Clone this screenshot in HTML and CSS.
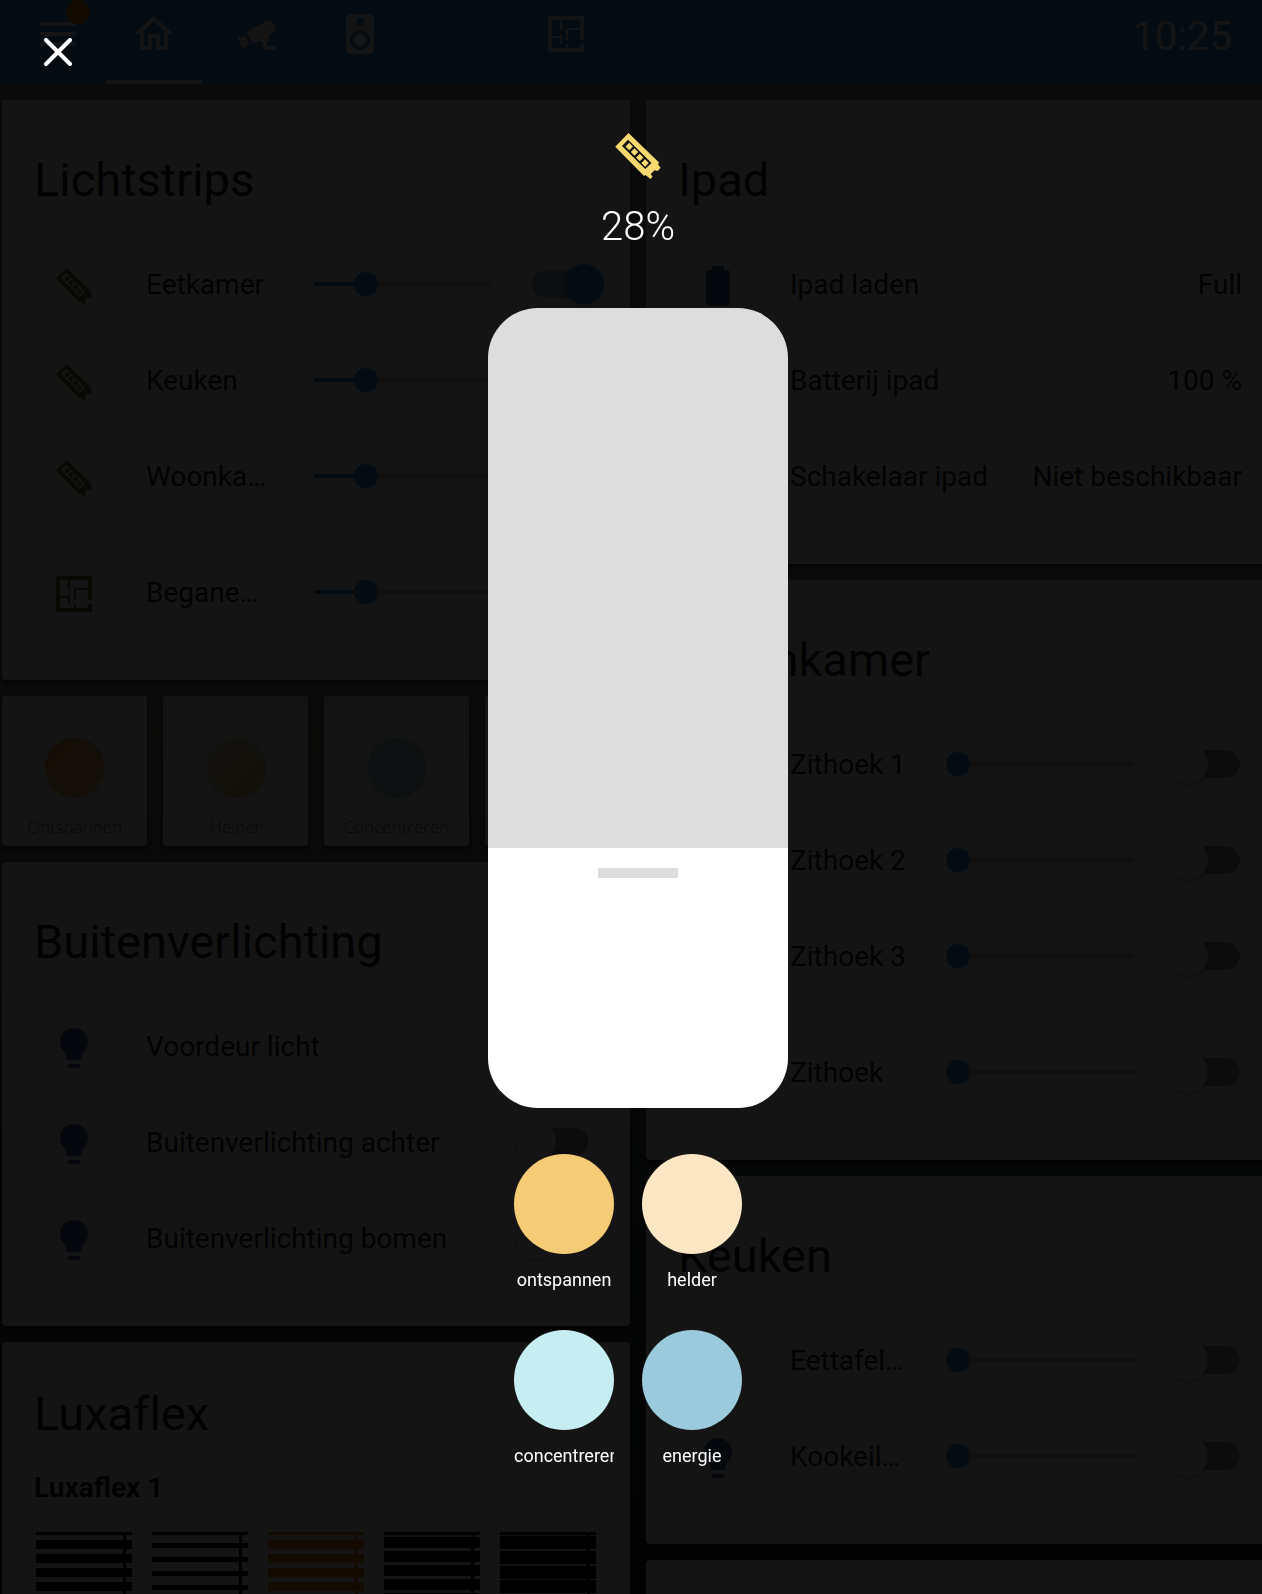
FILE: index.html
```html
<!DOCTYPE html>
<html lang="nl">
<head>
<meta charset="utf-8">
<meta name="viewport" content="width=device-width, initial-scale=1">
<title>Home</title>
<link rel="stylesheet" href="styles.css">
</head>
<body>
<svg class="sprite" aria-hidden="true">
  <symbol id="led" viewBox="0 0 24 24"><path fill-rule="evenodd" d="M8.2 2.8L2.9 8.3L14.4 20L15 19.6L17 21.2L17.8 20.3L17.1 19.2L18.6 17.7L19.9 18L21 16.7L20 15.3L20.4 14.6ZM8 5.5L17.4 14.8L14.9 17.2L5.6 8ZM8.5 6.7L10 8.2L8.5 9.7L7 8.2ZM10.6 8.9L12.1 10.4L10.6 11.9L9.1 10.4ZM12.7 11.1L14.2 12.6L12.7 14.1L11.2 12.6ZM14.8 13.3L16.3 14.8L14.8 16.3L13.3 14.8Z"/></symbol>
  <symbol id="plan" viewBox="0 0 24 24"><path d="M10,5V10H9V5H5V13H9V12H10V17H9V14H5V19H12V17H13V19H19V17H21V21H3V3H21V15H19V10H13V15H12V9H19V5H10Z"/></symbol>
  <symbol id="bulb" viewBox="0 0 24 24"><path d="M12,2A7,7 0 0,0 5,9C5,11.38 6.19,13.47 8,14.74V17A1,1 0 0,0 9,18H15A1,1 0 0,0 16,17V14.74C17.81,13.47 19,11.38 19,9A7,7 0 0,0 12,2M9,21A1,1 0 0,0 10,22H14A1,1 0 0,0 15,21V20H9V21Z"/></symbol>
  <symbol id="battery" viewBox="0 0 24 24"><path d="M16.67,4H15V2H9V4H7.33A1.33,1.33 0 0,0 6,5.33V20.67C6,21.4 6.6,22 7.33,22H16.67A1.33,1.33 0 0,0 18,20.67V5.33C18,4.6 17.4,4 16.67,4Z"/></symbol>
</svg>

<div class="app">
  <header class="bar">
    <button class="menu" aria-label="Menu">
      <svg class="icon" viewBox="0 0 24 24"><path d="M3,6H21V8H3V6M3,11H21V13H3V11M3,16H21V18H3V16Z"/></svg>
      <span class="dot"></span>
    </button>
    <nav class="tabs">
      <a class="tab active" href="#home" aria-label="Home"><svg class="icon" viewBox="0 0 24 24"><path d="M12 5.69L17 10.19V18H15V12H9V18H7V10.19L12 5.69M12 3L2 12H5V20H11V14H13V20H19V12H22L12 3Z"/></svg></a>
      <a class="tab" href="#cameras" aria-label="Camera's"><svg class="icon" viewBox="0 0 24 24"><path d="M18.15,4.94C17.77,4.91 17.37,5 17,5.2L8.35,10.2C7.39,10.76 7.07,12 7.62,12.94L9.12,15.53C9.67,16.5 10.89,16.82 11.85,16.27L13.65,15.23C13.92,15.69 14.32,16.06 14.81,16.27V18.04C14.81,19.13 15.7,20 16.81,20H22V18.04H16.81V16.27C17.72,15.87 18.31,14.97 18.31,14C18.31,13.54 18.19,13.11 17.97,12.73L20.5,11.27C21.47,10.71 21.8,9.5 21.24,8.53L19.74,5.94C19.4,5.34 18.79,5 18.15,4.94M6.22,13.17L2,13.87L2.75,15.17L4.75,18.63L5.5,19.93L8.22,16.63L6.22,13.17Z"/></svg></a>
      <a class="tab" href="#audio" aria-label="Audio"><svg class="icon" viewBox="0 0 24 24"><path d="M12,12A3,3 0 0,0 9,15A3,3 0 0,0 12,18A3,3 0 0,0 15,15A3,3 0 0,0 12,12M12,20A5,5 0 0,1 7,15A5,5 0 0,1 12,10A5,5 0 0,1 17,15A5,5 0 0,1 12,20M12,4A2,2 0 0,1 14,6A2,2 0 0,1 12,8C10.89,8 10,7.1 10,6C10,4.89 10.89,4 12,4M17,2H7C5.89,2 5,2.89 5,4V20A2,2 0 0,0 7,22H17A2,2 0 0,0 19,20V4C19,2.89 18.1,2 17,2Z"/></svg></a>
      <span class="tab"></span>
      <a class="tab" href="#plattegrond" aria-label="Plattegrond"><svg class="icon"><use href="#plan"/></svg></a>
    </nav>
    <time class="clock">10:25</time>
  </header>

  <main class="columns">
    <div class="column">
      <section class="card">
        <h2 class="title">Lichtstrips</h2>
        <div class="rows">
          <div class="row"><svg class="icon lit"><use href="#led"/></svg><span class="name" id="n1">Eetkamer</span><input class="slider on" type="range" max="255" value="75" aria-labelledby="n1"><input class="toggle" type="checkbox" checked aria-labelledby="n1"></div>
          <div class="row"><svg class="icon lit"><use href="#led"/></svg><span class="name" id="n2">Keuken</span><input class="slider on" type="range" max="255" value="75" aria-labelledby="n2"><input class="toggle" type="checkbox" checked aria-labelledby="n2"></div>
          <div class="row"><svg class="icon lit"><use href="#led"/></svg><span class="name" id="n3">Woonka…</span><input class="slider on" type="range" max="255" value="75" aria-labelledby="n3"><input class="toggle" type="checkbox" checked aria-labelledby="n3"></div>
          <div class="row group"><svg class="icon lit"><use href="#plan"/></svg><span class="name" id="n4">Begane…</span><input class="slider on" type="range" max="255" value="75" aria-labelledby="n4"><input class="toggle" type="checkbox" checked aria-labelledby="n4"></div>
        </div>
      </section>

      <div class="scenes">
        <button class="scene"><span class="ball relax"></span>Ontspannen</button>
        <button class="scene"><span class="ball bright"></span>Helder</button>
        <button class="scene"><span class="ball focus"></span>Concentreren</button>
        <button class="scene"><span class="ball energy"></span>Energie</button>
      </div>

      <section class="card">
        <h2 class="title">Buitenverlichting</h2>
        <div class="rows">
          <div class="row"><svg class="icon"><use href="#bulb"/></svg><label class="name wide" for="b1">Voordeur licht</label><input class="toggle" id="b1" type="checkbox"></div>
          <div class="row"><svg class="icon"><use href="#bulb"/></svg><label class="name wide" for="b2">Buitenverlichting achter</label><input class="toggle" id="b2" type="checkbox"></div>
          <div class="row"><svg class="icon"><use href="#bulb"/></svg><label class="name wide" for="b3">Buitenverlichting bomen</label><input class="toggle" id="b3" type="checkbox"></div>
        </div>
      </section>

      <section class="card blinds-card">
        <h2 class="title">Luxaflex</h2>
        <h3 class="subtitle">Luxaflex 1</h3>
        <div class="blinds">
          <svg class="blind" viewBox="0 0 96 96"><path d="M0 0h96v3H0zM87 3h3v93h-3zM0 8h96v9H0zM0 22h96v9H0zM0 36h96v9H0zM0 50h96v9H0zM0 64h96v9H0zM0 78h96v9H0z"/></svg>
          <svg class="blind" viewBox="0 0 96 96"><path d="M0 0h96v3H0zM87 3h3v93h-3zM0 11h96v5H0zM0 25h96v5H0zM0 39h96v5H0zM0 53h96v5H0zM0 67h96v5H0zM0 81h96v5H0z"/></svg>
          <svg class="blind current" viewBox="0 0 96 96"><path d="M0 0h96v3H0zM87 3h3v93h-3zM0 8h96v9H0zM0 22h96v9H0zM0 36h96v9H0zM0 50h96v9H0zM0 64h96v9H0zM0 78h96v9H0z"/></svg>
          <svg class="blind" viewBox="0 0 96 96"><path d="M0 0h96v3H0zM87 3h3v93h-3zM0 5h96v11H0zM0 19h96v11H0zM0 33h96v11H0zM0 47h96v11H0zM0 61h96v11H0zM0 75h96v11H0z"/></svg>
          <svg class="blind" viewBox="0 0 96 96"><path d="M0 0h96v3H0zM87 3h3v93h-3zM0 4h96v13H0zM0 19h96v13H0zM0 34h96v13H0zM0 48h96v13H0zM0 63h96v13H0zM0 78h96v13H0z"/></svg>
        </div>
      </section>
    </div>

    <div class="column right">
      <section class="card">
        <h2 class="title">Ipad</h2>
        <div class="rows">
          <div class="row"><svg class="icon"><use href="#battery"/></svg><span class="name wide">Ipad laden</span><span class="value">Full</span></div>
          <div class="row"><svg class="icon"><use href="#battery"/></svg><span class="name wide">Batterij ipad</span><span class="value">100 %</span></div>
          <div class="row"><svg class="icon"><use href="#bulb"/></svg><span class="name wide">Schakelaar ipad</span><span class="value">Niet beschikbaar</span></div>
        </div>
      </section>

      <section class="card">
        <h2 class="title">Woonkamer</h2>
        <div class="rows">
          <div class="row"><svg class="icon"><use href="#bulb"/></svg><span class="name" id="w1">Zithoek 1</span><input class="slider" type="range" value="0" aria-labelledby="w1"><input class="toggle" type="checkbox" aria-labelledby="w1"></div>
          <div class="row"><svg class="icon"><use href="#bulb"/></svg><span class="name" id="w2">Zithoek 2</span><input class="slider" type="range" value="0" aria-labelledby="w2"><input class="toggle" type="checkbox" aria-labelledby="w2"></div>
          <div class="row"><svg class="icon"><use href="#bulb"/></svg><span class="name" id="w3">Zithoek 3</span><input class="slider" type="range" value="0" aria-labelledby="w3"><input class="toggle" type="checkbox" aria-labelledby="w3"></div>
          <div class="row group"><svg class="icon"><use href="#bulb"/></svg><span class="name" id="w4">Zithoek</span><input class="slider" type="range" value="0" aria-labelledby="w4"><input class="toggle" type="checkbox" aria-labelledby="w4"></div>
        </div>
      </section>

      <section class="card">
        <h2 class="title">Keuken</h2>
        <div class="rows">
          <div class="row"><svg class="icon"><use href="#bulb"/></svg><span class="name" id="k1">Eettafel…</span><input class="slider" type="range" value="0" aria-labelledby="k1"><input class="toggle" type="checkbox" aria-labelledby="k1"></div>
          <div class="row"><svg class="icon"><use href="#bulb"/></svg><span class="name" id="k2">Kookeil…</span><input class="slider" type="range" value="0" aria-labelledby="k2"><input class="toggle" type="checkbox" aria-labelledby="k2"></div>
        </div>
      </section>

      <section class="card next"></section>
    </div>
  </main>
</div>

<div class="popup" role="dialog" aria-label="Lichtstrip">
  <button class="close" aria-label="Sluiten"><svg viewBox="0 0 28 28"><path d="M2 2L26 26M26 2L2 26"/></svg></button>
  <div class="panel">
    <svg class="popup-icon"><use href="#led"/></svg>
    <output class="percent" for="brightness">28%</output>
    <input class="brightness" id="brightness" type="range" min="0" max="100" value="28" aria-label="Helderheid">
    <div class="swatches">
      <button class="swatch"><span class="color relax"></span><span class="label">ontspannen</span></button>
      <button class="swatch"><span class="color bright"></span><span class="label">helder</span></button>
      <button class="swatch"><span class="color focus"></span><span class="label">concentreren</span></button>
      <button class="swatch"><span class="color energy"></span><span class="label">energie</span></button>
    </div>
  </div>
</div>
</body>
</html>
```
FILE: styles.css
```css
:root {
  --primary: #3c92da;
  --overhang: 14px;
}

* { box-sizing: border-box; }

body {
  margin: 0;
  height: 100vh;
  overflow: hidden;
  background: #000;
  font-family: Roboto, "Liberation Sans", sans-serif;
  font-size: 28px;
  line-height: 40px;
  color: #212121;
}

button {
  border: 0;
  padding: 0;
  background: none;
  font: inherit;
  color: inherit;
}

.sprite { display: none; }

.icon {
  width: 48px;
  height: 48px;
  flex: none;
  display: block;
  fill: currentColor;
}

.app {
  width: calc(100% + var(--overhang));
  height: 100vh;
  overflow: hidden;
  background: linear-gradient(#7c8080 5%, #80807a 45%, #384448 80%, #24282c 100%);
}

/* top bar */
.bar {
  display: flex;
  height: 84px;
  padding: 0 44px 0 34px;
  background: var(--primary);
  color: #fff;
}

.menu {
  position: relative;
  width: 48px;
  height: 68px;
  color: inherit;
}

.dot {
  position: absolute;
  top: 0;
  right: -8px;
  width: 24px;
  height: 24px;
  border-radius: 50%;
  background: #f58a00;
}

.tabs {
  display: flex;
  gap: 7px;
  margin-left: 24px;
  flex: 1;
}

.tab {
  display: flex;
  justify-content: center;
  width: 96px;
  padding-top: 10px;
  color: inherit;
}

.active { border-bottom: 4px solid #fff; }

.clock {
  font-size: 40px;
  line-height: 74px;
}

/* cards */
.columns {
  display: grid;
  grid-template-columns: 1fr 1fr;
  gap: 16px;
  padding: 16px 2px;
}

.column {
  display: flex;
  flex-direction: column;
  gap: 16px;
  min-width: 0;
}

.card {
  padding: 40px 32px 48px;
  border-radius: 4px;
  background: #fff;
  box-shadow: 0 4px 4px rgba(0, 0, 0, .5);
}

.title {
  margin: 0 0 24px;
  font-size: 47px;
  font-weight: 400;
  font-variant-ligatures: none;
  line-height: 80px;
}

.next { min-height: 200px; }

.rows {
  display: flex;
  flex-direction: column;
  gap: 16px;
}

.row {
  display: flex;
  align-items: center;
  height: 80px;
}

.group { margin-top: 20px; }

.row .icon {
  width: 80px;
  height: 52px;
  padding-top: 4px;
  margin-right: 32px;
  color: #3c6c96;
}

.row .lit { color: #806a1c; }

.name,
.value {
  padding-top: 2px;
}

.name {
  flex: none;
  width: 120px;
  margin-right: 36px;
  white-space: nowrap;
}

.wide {
  flex: 1;
  margin-right: 0;
}

.slider {
  appearance: none;
  flex: none;
  width: 200px;
  height: 24px;
  margin: 0 30px 0 0;
  background:
    linear-gradient(var(--primary), var(--primary)) 12px 10px / var(--fill, 0) 4px no-repeat,
    linear-gradient(#bdbdbd, #bdbdbd) 12px 10px / 176px 4px no-repeat;
}

.on { --fill: 52px; }

.slider::-webkit-slider-thumb {
  appearance: none;
  width: 24px;
  height: 24px;
  border-radius: 50%;
  background: var(--primary);
}

.right .slider { margin-right: 22px; }

.toggle {
  appearance: none;
  flex: none;
  display: flex;
  align-items: center;
  width: 72px;
  height: 28px;
  margin: 0;
  border-radius: 14px;
  background: #999;
}

.toggle::before {
  content: "";
  width: 40px;
  height: 40px;
  border-radius: 50%;
  background: #fafafa;
  box-shadow: 0 2px 4px rgba(0, 0, 0, .3);
}

.toggle:checked {
  justify-content: flex-end;
  background: #94b8d8;
}

.toggle:checked::before { background: var(--primary); }

.wide + .toggle { margin-right: 10px; }

/* scene buttons */
.scenes {
  display: grid;
  grid-template-columns: repeat(4, 1fr);
  gap: 16px;
}

.scene {
  display: flex;
  flex-direction: column;
  align-items: center;
  height: 150px;
  padding-top: 42px;
  border-radius: 4px;
  background: #fff;
  box-shadow: 0 4px 4px rgba(0, 0, 0, .5);
  color: #606060;
  font: 300 17px/24px "Open Sans", sans-serif;
}

.ball {
  width: 60px;
  height: 60px;
  margin-bottom: 17px;
  border-radius: 50%;
}

.ball.relax { background: linear-gradient(135deg, #e8a048, #f0cc70); }
.ball.bright { background: linear-gradient(135deg, #f4e4c4, #f0c468); }
.ball.focus { background: linear-gradient(135deg, #b8dce4, #98c4d0); }
.ball.energy { background: linear-gradient(135deg, #9acadb, #60a8d0); }

/* blinds */
.blinds-card { padding-top: 32px; }

.blinds-card .title { margin-bottom: 12px; }

.subtitle {
  margin: 0 0 24px;
  padding-top: 2px;
  font-size: 28px;
  font-weight: 700;
}

.blinds {
  display: flex;
  gap: 20px;
  padding-left: 2px;
}

.blind {
  width: 96px;
  height: 96px;
  fill: #000;
}

.current { fill: #f58a00; }

/* light popup */
.popup {
  position: fixed;
  inset: 0;
  overflow: hidden;
  padding-left: var(--overhang);
  background: rgba(0, 0, 0, .92);
  color: #fff;
}

.close {
  position: absolute;
  top: 38px;
  left: 44px;
  width: 28px;
  height: 28px;
}

.close svg {
  display: block;
  stroke: #fff;
  stroke-width: 4;
  stroke-linecap: round;
}

.panel {
  display: flex;
  flex-direction: column;
  align-items: center;
  padding-top: 126px;
}

.popup-icon {
  width: 60px;
  height: 60px;
  fill: #f7d96f;
}

.percent {
  margin: 17px 0 57px;
  font-size: 40px;
  font-weight: 300;
  line-height: 48px;
}

.brightness {
  appearance: none;
  writing-mode: vertical-lr;
  direction: rtl;
  width: 300px;
  height: 800px;
  margin: 0;
  border-radius: 50px;
  background:
    linear-gradient(#ddd, #ddd) 50% 560px / 80px 10px no-repeat,
    linear-gradient(#ddd 540px, #fff 540px);
}

.brightness::-webkit-slider-thumb {
  appearance: none;
  width: 300px;
  height: 50px;
  opacity: 0;
}

.swatches {
  display: grid;
  grid-template-columns: 100px 100px;
  gap: 38px 28px;
  margin-top: 46px;
  padding-right: 20px;
}

.swatch {
  display: flex;
  flex-direction: column;
  gap: 14px;
}

.color {
  width: 100px;
  height: 100px;
  border-radius: 50%;
}

.color.relax { background: #f5cb76; }
.color.bright { background: #fce6c4; }
.color.focus { background: #c6eef2; }
.color.energy { background: #9acadb; }

.label {
  width: 100px;
  overflow: hidden;
  font-size: 18px;
  line-height: 24px;
  text-align: center;
}
```
